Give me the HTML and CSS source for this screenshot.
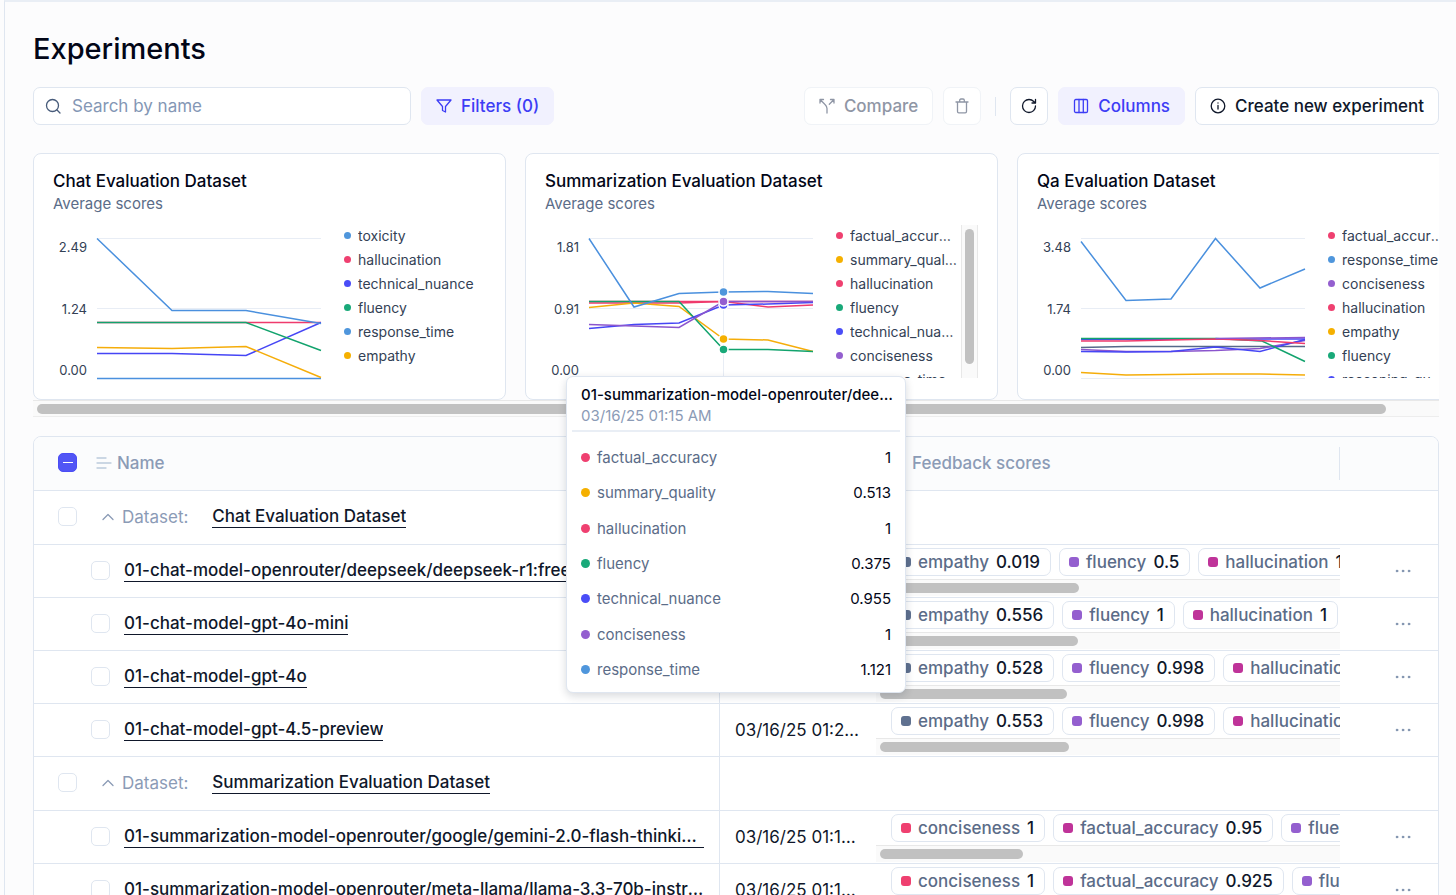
FILE: index.html
```html
<!DOCTYPE html>
<html lang="en">
<head>
  <meta charset="UTF-8" />
  <meta name="viewport" content="width=device-width, initial-scale=1.0"/>
  <title>Experiments</title>
  <link rel="stylesheet" href="styles.css">
</head>
<body>
  <main class="page">
    <h1 class="page-title">Experiments</h1>

    <div class="toolbar">
      <label class="search">
        <svg class="icon" viewBox="0 0 16 16"><circle cx="7.5" cy="7.5" r="6"/><path d="M12 12l3 3"/></svg>
        <input type="text" placeholder="Search by name" aria-label="Search by name">
      </label>
      <button type="button" class="btn btn-soft">
        <svg class="icon" viewBox="0 0 16 16"><path d="M1 2h14L9.5 8.5V14l-3-1.5v-4z"/></svg>
        Filters (0)
      </button>
      <div class="toolbar-actions">
        <button type="button" class="btn" disabled>
          <svg class="icon" viewBox="0 0 16 16"><path d="M1 5V1.500h3.500M11.500 1.500H15V5M1.500 2l4.300 4.200C7.300 7.600 8 8.500 8 10.500V15M14.500 2l-4.200 4.200"/></svg>
          Compare
        </button>
        <button type="button" class="btn btn-icon" disabled aria-label="Delete">
          <svg class="icon" viewBox="0 0 16 16"><path d="M2 4h12M3.500 4v9.500c0 .8.5 1.300 1.300 1.300h6.400c.8 0 1.300-.5 1.300-1.300V4M5.700 4V2.300c0-.8.5-1.300 1.200-1.300h2.200c.7 0 1.200.5 1.200 1.300V4"/></svg>
        </button>
        <span class="divider"></span>
        <button type="button" class="btn btn-icon" aria-label="Refresh">
          <svg class="icon" viewBox="0 0 16 16"><path d="M14.500 8A6.500 6.500 0 1 1 8 1.500c1.900 0 3.600.8 4.800 2l1.700 1.500M14.500 1.500V5H11"/></svg>
        </button>
        <button type="button" class="btn btn-soft">
          <svg class="icon" viewBox="0 0 16 16"><rect x="1.500" y="1.500" width="13" height="13" rx="1.300"/><path d="M6 1.500v13M10.300 1.500v13"/></svg>
          Columns
        </button>
        <button type="button" class="btn">
          <svg class="icon" viewBox="0 0 16 16"><circle cx="8" cy="8" r="6.800"/><path d="M8 7.500v3.500M8 5h.01"/></svg>
          Create new experiment
        </button>
      </div>
    </div>

    <section class="charts">
      <article class="card">
        <h2>Chat Evaluation Dataset</h2>
        <p>Average scores</p>
        <div class="chart">
          <div class="axis"><span>2.49</span><span>1.24</span><span>0.00</span></div>
          <svg class="plot" viewBox="0 -2.500 224 144">
            <path class="grid" d="M0 0h224M0 70h224M0 140h224"/>
            <polyline class="s-blue" points="0,140 224,140"/>
            <polyline class="s-pink" points="0,84 224,84"/>
            <polyline class="s-indigo" points="0,115 75,115 149,117 224,84"/>
            <polyline class="s-green" points="0,84 149,84 224,112"/>
            <polyline class="s-blue" points="0,0 75,72 149,72 224,85"/>
            <polyline class="s-yellow" points="0,109 75,110 149,108 224,139"/>
          </svg>
          <ul class="legend">
            <li><i class="dot blue"></i><span>toxicity</span></li>
            <li><i class="dot pink"></i><span>hallucination</span></li>
            <li><i class="dot indigo"></i><span>technical_nuance</span></li>
            <li><i class="dot green"></i><span>fluency</span></li>
            <li><i class="dot blue"></i><span>response_time</span></li>
            <li><i class="dot yellow"></i><span>empathy</span></li>
          </ul>
        </div>
      </article>

      <article class="card">
        <h2>Summarization Evaluation Dataset</h2>
        <p>Average scores</p>
        <div class="chart">
          <div class="axis"><span>1.81</span><span>0.91</span><span>0.00</span></div>
          <svg class="plot" viewBox="0 -2.500 224 144">
            <path class="grid" d="M0 0h224M0 70h224M0 140h224M134.500 0v140"/>
            <polyline class="s-pink" points="0,64.500 90,64.500 134.500,63 179,68.500 224,66.500"/>
            <polyline class="s-yellow" points="0,69 45,64.500 90,68 134.500,100.500 179,101.500 224,113"/>
            <polyline class="s-pink" points="0,63 224,63"/>
            <polyline class="s-green" points="0,63 90,63 134.500,111 179,111 224,113"/>
            <polyline class="s-indigo" points="0,90 45,86 90,84.500 134.500,66.500 179,65.500 224,64"/>
            <polyline class="s-purple" points="0,86 45,87.500 90,89 134.500,63 224,63"/>
            <polyline class="s-blue" points="0,0 45,68.500 90,55 134.500,53.500 179,53 224,55"/>
            <circle class="m-indigo" cx="134.500" cy="66.500" r="4.500"/>
            <circle class="m-yellow" cx="134.500" cy="100.500" r="4.500"/>
            <circle class="m-green" cx="134.500" cy="111" r="4.500"/>
            <circle class="m-purple" cx="134.500" cy="63" r="4.500"/>
            <circle class="m-blue" cx="134.500" cy="53.500" r="4.500"/>
          </svg>
          <ul class="legend">
            <li><i class="dot pink"></i><span>factual_accuracy</span></li>
            <li><i class="dot yellow"></i><span>summary_quality</span></li>
            <li><i class="dot pink"></i><span>hallucination</span></li>
            <li><i class="dot green"></i><span>fluency</span></li>
            <li><i class="dot indigo"></i><span>technical_nuance</span></li>
            <li><i class="dot purple"></i><span>conciseness</span></li>
            <li><i class="dot blue"></i><span>response_time</span></li>
          </ul>
          <div class="vtrack"><div class="vthumb"></div></div>
        </div>
      </article>

      <article class="card">
        <h2>Qa Evaluation Dataset</h2>
        <p>Average scores</p>
        <div class="chart">
          <div class="axis"><span>3.48</span><span>1.74</span><span>0.00</span></div>
          <svg class="plot" viewBox="0 -2.500 224 144">
            <path class="grid" d="M0 0h224M0 70h224M0 140h224"/>
            <polyline class="s-slate" points="0,109 45,108 224,108"/>
            <polyline class="s-indigo" points="0,101 224,100.500"/>
            <polyline class="s-purple" points="0,111 45,113 90,113 134.500,112 179,110 224,102"/>
            <polyline class="s-indigo" points="0,113 45,113.500 90,113 134.500,108.500 179,113 224,101"/>
            <polyline class="s-green" points="0,100 134.500,100 181,102.500 224,123"/>
            <polyline class="s-pink" points="0,102.500 45,102.500 134.500,100.500 179,102 224,105"/>
            <polyline class="s-purple" points="134.500,100 224,99"/>
            <polyline class="s-yellow" points="0,134 45,136.500 134.500,135.500 179,135.500 224,136.500"/>
            <polyline class="s-blue" points="0,3 45,62 90,60.500 134.500,0 179,49.500 224,30.500"/>
          </svg>
          <ul class="legend">
            <li><i class="dot pink"></i><span>factual_accuracy</span></li>
            <li><i class="dot blue"></i><span>response_time</span></li>
            <li><i class="dot purple"></i><span>conciseness</span></li>
            <li><i class="dot pink"></i><span>hallucination</span></li>
            <li><i class="dot yellow"></i><span>empathy</span></li>
            <li><i class="dot green"></i><span>fluency</span></li>
            <li><i class="dot indigo"></i><span>reasoning_quality</span></li>
          </ul>
          <div class="vtrack"><div class="vthumb"></div></div>
        </div>
      </article>
    </section>
    <div class="track track-charts"><div class="thumb" style="width: 96.5%"></div></div>

    <div class="table-wrap">
      <table>
        <colgroup>
          <col>
          <col class="col-date">
          <col class="col-scores">
          <col class="col-menu">
        </colgroup>
        <thead>
          <tr>
            <th>
              <div class="name-head">
                <input type="checkbox" class="check check-some" aria-label="Select all" checked>
                <svg class="icon" viewBox="0 0 16 16"><path d="M1 3h9M1 8h14M1 13h9"/></svg>
                Name
              </div>
            </th>
            <th></th>
            <th><div class="score-head">Feedback scores</div></th>
            <th></th>
          </tr>
        </thead>
        <tbody>
          <tr class="group">
            <td>
              <div class="group-cell">
                <input type="checkbox" class="check" aria-label="Select Chat Evaluation Dataset">
                <svg class="icon" viewBox="0 0 16 16"><path d="M3 10.500l5-5 5 5"/></svg>
                <span>Dataset:</span>
                <a href="#">Chat Evaluation Dataset</a>
              </div>
            </td>
            <td></td><td></td><td></td>
          </tr>
          <tr>
            <td><div class="name-cell"><input type="checkbox" class="check" aria-label="Select experiment"><a href="#">01-chat-model-openrouter/deepseek/deepseek-r1:free</a></div></td>
            <td><div class="date">03/16/25 01:24 AM</div></td>
            <td class="score-cell">
              <div class="scores">
                <span class="chip"><i class="slate"></i>empathy <b>0.019</b></span>
                <span class="chip"><i class="purple"></i>fluency <b>0.5</b></span>
                <span class="chip"><i class="magenta"></i>hallucination <b>1</b></span>
              </div>
              <div class="track"><div class="thumb" style="width: 43.6%"></div></div>
            </td>
            <td><button type="button" class="menu" aria-label="Actions"><svg class="icon" viewBox="0 0 16 16"><circle cx="2" cy="8" r="1"/><circle cx="8" cy="8" r="1"/><circle cx="14" cy="8" r="1"/></svg></button></td>
          </tr>
          <tr>
            <td><div class="name-cell"><input type="checkbox" class="check" aria-label="Select experiment"><a href="#">01-chat-model-gpt-4o-mini</a></div></td>
            <td><div class="date">03/16/25 01:23 AM</div></td>
            <td class="score-cell">
              <div class="scores">
                <span class="chip"><i class="slate"></i>empathy <b>0.556</b></span>
                <span class="chip"><i class="purple"></i>fluency <b>1</b></span>
                <span class="chip"><i class="magenta"></i>hallucination <b>1</b></span>
              </div>
              <div class="track"><div class="thumb" style="width: 43.4%"></div></div>
            </td>
            <td><button type="button" class="menu" aria-label="Actions"><svg class="icon" viewBox="0 0 16 16"><circle cx="2" cy="8" r="1"/><circle cx="8" cy="8" r="1"/><circle cx="14" cy="8" r="1"/></svg></button></td>
          </tr>
          <tr>
            <td><div class="name-cell"><input type="checkbox" class="check" aria-label="Select experiment"><a href="#">01-chat-model-gpt-4o</a></div></td>
            <td><div class="date">03/16/25 01:22 AM</div></td>
            <td class="score-cell">
              <div class="scores">
                <span class="chip"><i class="slate"></i>empathy <b>0.528</b></span>
                <span class="chip"><i class="purple"></i>fluency <b>0.998</b></span>
                <span class="chip"><i class="magenta"></i>hallucination <b>1</b></span>
              </div>
              <div class="track"><div class="thumb" style="width: 41%"></div></div>
            </td>
            <td><button type="button" class="menu" aria-label="Actions"><svg class="icon" viewBox="0 0 16 16"><circle cx="2" cy="8" r="1"/><circle cx="8" cy="8" r="1"/><circle cx="14" cy="8" r="1"/></svg></button></td>
          </tr>
          <tr>
            <td><div class="name-cell"><input type="checkbox" class="check" aria-label="Select experiment"><a href="#">01-chat-model-gpt-4.5-preview</a></div></td>
            <td><div class="date">03/16/25 01:21 AM</div></td>
            <td class="score-cell">
              <div class="scores">
                <span class="chip"><i class="slate"></i>empathy <b>0.553</b></span>
                <span class="chip"><i class="purple"></i>fluency <b>0.998</b></span>
                <span class="chip"><i class="magenta"></i>hallucination <b>1</b></span>
              </div>
              <div class="track"><div class="thumb" style="width: 41.4%"></div></div>
            </td>
            <td><button type="button" class="menu" aria-label="Actions"><svg class="icon" viewBox="0 0 16 16"><circle cx="2" cy="8" r="1"/><circle cx="8" cy="8" r="1"/><circle cx="14" cy="8" r="1"/></svg></button></td>
          </tr>
          <tr class="group">
            <td>
              <div class="group-cell">
                <input type="checkbox" class="check" aria-label="Select Summarization Evaluation Dataset">
                <svg class="icon" viewBox="0 0 16 16"><path d="M3 10.500l5-5 5 5"/></svg>
                <span>Dataset:</span>
                <a href="#">Summarization Evaluation Dataset</a>
              </div>
            </td>
            <td></td><td></td><td></td>
          </tr>
          <tr>
            <td><div class="name-cell"><input type="checkbox" class="check" aria-label="Select experiment"><a href="#">01-summarization-model-openrouter/google/gemini-2.0-flash-thinking-exp:free</a></div></td>
            <td><div class="date">03/16/25 01:18 AM</div></td>
            <td class="score-cell">
              <div class="scores">
                <span class="chip"><i class="pink"></i>conciseness <b>1</b></span>
                <span class="chip"><i class="magenta"></i>factual_accuracy <b>0.95</b></span>
                <span class="chip"><i class="purple"></i>fluency <b>0.4</b></span>
              </div>
              <div class="track"><div class="thumb" style="width: 31.4%"></div></div>
            </td>
            <td><button type="button" class="menu" aria-label="Actions"><svg class="icon" viewBox="0 0 16 16"><circle cx="2" cy="8" r="1"/><circle cx="8" cy="8" r="1"/><circle cx="14" cy="8" r="1"/></svg></button></td>
          </tr>
          <tr>
            <td><div class="name-cell"><input type="checkbox" class="check" aria-label="Select experiment"><a href="#">01-summarization-model-openrouter/meta-llama/llama-3.3-70b-instruct:free</a></div></td>
            <td><div class="date">03/16/25 01:17 AM</div></td>
            <td class="score-cell">
              <div class="scores">
                <span class="chip"><i class="pink"></i>conciseness <b>1</b></span>
                <span class="chip"><i class="magenta"></i>factual_accuracy <b>0.925</b></span>
                <span class="chip"><i class="purple"></i>fluency <b>0.4</b></span>
              </div>
              <div class="track"><div class="thumb" style="width: 31%"></div></div>
            </td>
            <td><button type="button" class="menu" aria-label="Actions"><svg class="icon" viewBox="0 0 16 16"><circle cx="2" cy="8" r="1"/><circle cx="8" cy="8" r="1"/><circle cx="14" cy="8" r="1"/></svg></button></td>
          </tr>
        </tbody>
      </table>
    </div>

    <div class="tooltip" role="tooltip">
      <div class="tooltip-head">
        <strong>01-summarization-model-openrouter/deepseek</strong>
        <span>03/16/25 01:15 AM</span>
      </div>
      <ul>
        <li><i class="dot pink"></i>factual_accuracy <b>1</b></li>
        <li><i class="dot yellow"></i>summary_quality <b>0.513</b></li>
        <li><i class="dot pink"></i>hallucination <b>1</b></li>
        <li><i class="dot green"></i>fluency <b>0.375</b></li>
        <li><i class="dot indigo"></i>technical_nuance <b>0.955</b></li>
        <li><i class="dot purple"></i>conciseness <b>1</b></li>
        <li><i class="dot blue"></i>response_time <b>1.121</b></li>
      </ul>
    </div>
  </main>
</body>
</html>
```
FILE: styles.css
```css
* {
  margin: 0;
  padding: 0;
  box-sizing: border-box;
}

body {
  background-color: #fcfcfd;
  font-family: Inter, sans-serif;
  font-size: 17px;
  color: #0f172a;
  height: 100vh;
  padding-left: 4px;
  overflow: hidden;
}

button,
input {
  font: inherit;
  color: inherit;
}

ul {
  list-style: none;
}

.page {
  position: relative;
  min-height: 100vh;
  border-top: 2px solid #e9eef5;
  border-left: 1px solid #dfe6f0;
  padding: 30px 17px 0 28px;
}

.page-title {
  font-size: 29px;
  font-weight: 500;
  line-height: 34px;
  color: #020617;
  margin-bottom: 21px;
}

.icon {
  flex: none;
  width: 16px;
  height: 16px;
  fill: none;
  stroke: currentColor;
  stroke-width: 1.3;
  stroke-linecap: round;
  stroke-linejoin: round;
}

/* toolbar */

.toolbar {
  display: flex;
  gap: 10px;
  margin-bottom: 28px;
}

.search {
  display: flex;
  align-items: center;
  gap: 11px;
  flex: 0 1 378px;
  height: 38px;
  padding: 0 11px 1px;
  background-color: white;
  border: 1px solid #dfe6f0;
  border-radius: 7px;
  color: #475b7a;
}

.search input {
  flex: 1;
  min-width: 0;
  border: none;
  outline: none;
  background: none;
}

.search input::placeholder {
  color: #8497b5;
}

.toolbar-actions {
  display: flex;
  align-items: center;
  gap: 10px;
  margin-left: auto;
}

.btn {
  display: flex;
  align-items: center;
  justify-content: center;
  gap: 9px;
  height: 38px;
  padding: 0 14px;
  background-color: white;
  border: 1px solid #dfe6f0;
  border-radius: 7px;
  font-weight: 500;
  white-space: nowrap;
  cursor: pointer;
}

.btn:disabled {
  color: #8f96a5;
  border-color: #f0f3f7;
  cursor: default;
}

.btn-soft {
  background-color: #f1f1fe;
  border-color: #f1f1fe;
  color: #3d3df5;
}

.btn-icon {
  width: 38px;
  padding: 0;
}

.divider {
  width: 1px;
  height: 19px;
  margin: 0 4px;
  background-color: #dfe6f0;
}

/* charts */

.charts {
  display: flex;
  gap: 19px;
  overflow: hidden;
}

.card {
  flex: 0 0 473px;
  min-width: 0;
  height: 247px;
  padding: 16px 19px;
  background-color: white;
  border: 1px solid #dfe6f0;
  border-radius: 8px;
}

.card h2 {
  font-size: 17px;
  font-weight: 500;
  line-height: 22px;
  color: #020617;
}

.card p {
  font-size: 15px;
  line-height: 24px;
  color: #5b6c88;
}

.chart {
  display: flex;
  margin-top: 9px;
  height: 153px;
}

.axis {
  flex: none;
  display: flex;
  flex-direction: column;
  justify-content: space-between;
  width: 34px;
  padding-top: 14px;
  font-size: 13px;
  line-height: 16px;
  text-align: right;
  color: #334155;
}

.plot {
  flex: none;
  width: 224px;
  height: 144px;
  margin: 11px 23px 0 10px;
  fill: none;
  stroke-width: 1.5;
  overflow: visible;
}

.grid {
  stroke: #e8edf5;
  stroke-width: 1;
}

.s-blue { stroke: #4a90de; }
.s-pink { stroke: #ef3b6d; }
.s-indigo { stroke: #4646f5; }
.s-green { stroke: #12a36d; }
.s-yellow { stroke: #f5ad0a; }
.s-purple { stroke: #8b55cd; }
.s-slate { stroke: #56698a; }

.plot circle {
  stroke: white;
  stroke-width: 1.5;
}

.m-blue { fill: #4f96dc; }
.m-indigo { fill: #4a4df7; }
.m-green { fill: #19a979; }
.m-yellow { fill: #f5b000; }
.m-purple { fill: #945fcf; }

.blue { background-color: #4f96dc; }
.pink { background-color: #ef4070; }
.indigo { background-color: #4a4df7; }
.green { background-color: #19a979; }
.yellow { background-color: #f5b000; }
.purple { background-color: #945fcf; }
.slate { background-color: #5f7190; }
.magenta { background-color: #bf3399; }

.legend {
  flex: 1;
  min-width: 0;
  overflow: hidden;
  font-size: 14px;
  color: #334155;
}

.legend li {
  display: flex;
  align-items: center;
  gap: 7px;
  height: 20px;
  margin-bottom: 4px;
}

.legend li span {
  overflow: hidden;
  white-space: nowrap;
  text-overflow: ellipsis;
}

.dot {
  flex: none;
  width: 7px;
  height: 7px;
  border-radius: 50%;
}

.vtrack {
  flex: none;
  width: 17px;
  margin-left: 4px;
  padding: 4px 3px;
  background-color: #fafafa;
  border: solid #e8e8e8;
  border-width: 0 1px;
}

.vthumb {
  height: 135px;
  border-radius: 5px;
  background-color: #c1c1c1;
}

.track {
  height: 17px;
  padding: 3px 4px;
  background-color: #fafafa;
  border-top: 1px solid #e8e8e8;
}

.thumb {
  height: 10px;
  border-radius: 5px;
  background-color: #c1c1c1;
}

.track-charts {
  border-bottom: 1px solid #ededed;
}

/* table */

.table-wrap {
  margin-top: 19px;
  background-color: white;
  border: 1px solid #dfe6f0;
  border-radius: 8px 8px 0 0;
  overflow: hidden;
}

table {
  width: 100%;
  table-layout: fixed;
  border-collapse: separate;
  border-spacing: 0;
}

.col-date { width: 156px; }
.col-scores { width: 464px; }
.col-menu { width: 98px; }

th {
  height: 54px;
  background-color: #fbfcfd;
  border-bottom: 1px solid #dfe6f0;
  font-weight: 500;
  text-align: left;
  color: #8b9bb6;
}

td {
  height: 53px;
  border-bottom: 1px solid #dfe6f0;
  vertical-align: middle;
}

.group td {
  height: 54px;
}

td:first-child {
  border-right: 1px solid #dfe6f0;
}

.score-cell {
  vertical-align: top;
}

.name-head,
.group-cell,
.name-cell {
  display: flex;
  align-items: center;
  padding: 0 15px 2px 24px;
}

.name-head .icon {
  margin: 0 5px 0 19px;
  color: #bccadc;
}

.group-cell {
  color: #8b9bb6;
}

.group-cell .icon {
  margin: 0 6px 0 23px;
}

.group-cell span {
  margin-right: 24px;
}

.name-cell {
  gap: 14px;
  padding-left: 57px;
}

td a {
  line-height: 22px;
  border-bottom: 1px solid #0f172a;
  font-weight: 500;
  color: #0f172a;
  text-decoration: none;
  white-space: nowrap;
  overflow: hidden;
  text-overflow: ellipsis;
}

.check {
  appearance: none;
  flex: none;
  display: flex;
  align-items: center;
  justify-content: center;
  width: 19px;
  height: 19px;
  border: 1px solid #dfe6f0;
  border-radius: 5px;
  background-color: white;
}

.check-some {
  background-color: #5155f5;
  border-color: #4a4df5;
}

.check-some::before {
  content: "";
  width: 10px;
  height: 1px;
  background-color: white;
}

.date {
  padding: 0 15px;
  white-space: nowrap;
  overflow: hidden;
  text-overflow: ellipsis;
}

.score-head {
  padding: 6px 36px;
  line-height: 21px;
  border-right: 1px solid #dfe6f0;
}

.scores {
  display: flex;
  gap: 8px;
  padding: 3px 0 3px 15px;
  overflow: hidden;
}

.chip {
  display: flex;
  align-items: center;
  flex: none;
  height: 28px;
  padding: 0 10px 0 9px;
  border: 1px solid #dfe6f0;
  border-radius: 7px;
  font-weight: 500;
  color: #5b6c88;
}

.chip i {
  width: 10px;
  height: 10px;
  margin-right: 7px;
  border-radius: 3px;
}

.chip b {
  margin-left: 7px;
  font-weight: 500;
  color: #0f172a;
}

.menu {
  display: flex;
  margin-left: 55px;
  border: none;
  background: none;
  color: #7588a6;
  cursor: pointer;
}

.menu .icon {
  fill: currentColor;
  stroke-width: 0.5;
}

/* tooltip over the hovered point */

.tooltip {
  position: absolute;
  top: 374px;
  left: 561px;
  display: flex;
  flex-direction: column;
  width: 340px;
  height: 317px;
  padding: 5px;
  background-color: white;
  border: 1px solid #dfe6f0;
  border-radius: 7px;
  box-shadow: 0 3px 8px rgba(15, 23, 42, 0.16);
}

.tooltip-head {
  padding: 2px 4px 4px 9px;
  border-bottom: 2px solid #e9eef5;
  font-size: 15px;
  line-height: 22px;
}

.tooltip-head strong {
  display: block;
  font-weight: 500;
  color: #020617;
  white-space: nowrap;
  overflow: hidden;
  text-overflow: ellipsis;
}

.tooltip-head span {
  display: block;
  line-height: 20px;
  color: #8b9bb6;
}

.tooltip ul {
  flex: 1;
  display: flex;
  flex-direction: column;
  padding: 8px 9px 0;
}

.tooltip li {
  flex: 1;
  display: flex;
  align-items: center;
  font-size: 15px;
  color: #5b6c88;
}

.tooltip .dot {
  width: 9px;
  height: 9px;
  margin-right: 7px;
}

.tooltip b {
  margin-left: auto;
  font-weight: 400;
  color: #020617;
}
```
